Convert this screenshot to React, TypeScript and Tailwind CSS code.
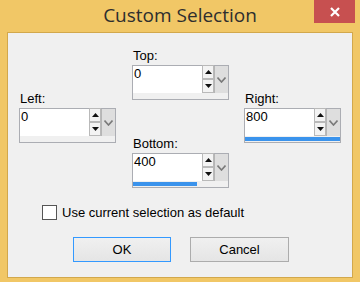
import React from 'react'

const ui = { fontFamily: '"Liberation Sans", Arial, sans-serif' }

function SpinButton({ up }: { up?: boolean }) {
  return (
    <div className="flex-1 flex items-center justify-center bg-[#f3f3f3] border border-[#b9b9b9] -ml-px first:-mt-px">
      <svg width="7" height="4" viewBox="0 0 7 4">
        {up ? <polygon points="0,4 7,4 3.5,0" fill="#111" /> : <polygon points="0,0 7,0 3.5,4" fill="#111" />}
      </svg>
    </div>
  )
}

function SpinField({ label, value, fill }: { label: string; value: string; fill: number }) {
  return (
    <div className="w-[97px]">
      <div className="h-[15px] leading-[15px] mb-[2px] pl-[1px]">{label}</div>
      <div className="border border-[#abadb3] bg-[#f0f0f0]">
        <div className="flex h-[27px]">
          <div className="flex-1 bg-white pl-[1px] leading-[15px]">{value}</div>
          <div className="w-[11px] flex flex-col">
            <SpinButton up />
            <SpinButton />
          </div>
          <div className="w-[14px] bg-[#dedede] border-l border-[#b5b5b5] flex items-center justify-center">
            <svg width="9" height="6" viewBox="0 0 9 6">
              <polyline points="0.5,0.5 4.5,5 8.5,0.5" fill="none" stroke="#7a7a7a" strokeWidth="1.6" />
            </svg>
          </div>
        </div>
        <div className="h-[6px] pt-[1px]">
          <div className="h-[4px] bg-[#3a93ec]" style={{ width: `${fill}%` }} />
        </div>
      </div>
    </div>
  )
}

export default function App() {
  return (
    <div className="w-[360px] h-[282px] bg-[#f1c766] flex flex-col overflow-hidden" style={ui}>
      <div className="relative h-[32px] shrink-0">
        <div
          className="text-center text-[19px] leading-[32px] text-[#2e2e2e] -mt-[1px]"
          style={{ fontFamily: '"Open Sans", "Noto Sans", sans-serif' }}
        >
          Custom Selection
        </div>
        <div className="absolute left-[314px] top-0 w-[41px] h-[23px] bg-[#c75050] flex items-center justify-center">
          <svg width="10" height="10" viewBox="0 0 10 10">
            <path d="M1 1 L9 9 M9 1 L1 9" stroke="#fff" strokeWidth="2.2" />
          </svg>
        </div>
      </div>

      <div className="mx-[7px] h-[246px] border border-[#d2a84c] bg-[#f0f0f0] text-[13px] text-black flex flex-col">
        <div className="flex items-start pl-[11px]">
          <div className="mt-[58px]">
            <SpinField label="Left:" value="0" fill={0} />
          </div>
          <div className="ml-[16px] mt-[15px] flex flex-col gap-[36px]">
            <SpinField label="Top:" value="0" fill={0} />
            <SpinField label="Bottom:" value="400" fill={67} />
          </div>
          <div className="ml-[15px] mt-[58px]">
            <SpinField label="Right:" value="800" fill={100} />
          </div>
        </div>

        <div className="flex items-center mt-[17px] pl-[34px] h-[15px]">
          <div className="w-[15px] h-[15px] border border-[#555] bg-white" />
          <span className="ml-[5px] leading-[15px]">Use current selection as default</span>
        </div>

        <div className="flex mt-[17px] pl-[65px] gap-[19px]">
          <button className="w-[98px] h-[25px] border border-[#3399ff] bg-gradient-to-b from-[#f0f0f0] to-[#e5e5e5] leading-[23px]">
            OK
          </button>
          <button className="w-[99px] h-[25px] border border-[#acacac] bg-gradient-to-b from-[#f0f0f0] to-[#e5e5e5] leading-[23px]">
            Cancel
          </button>
        </div>
      </div>
    </div>
  )
}
